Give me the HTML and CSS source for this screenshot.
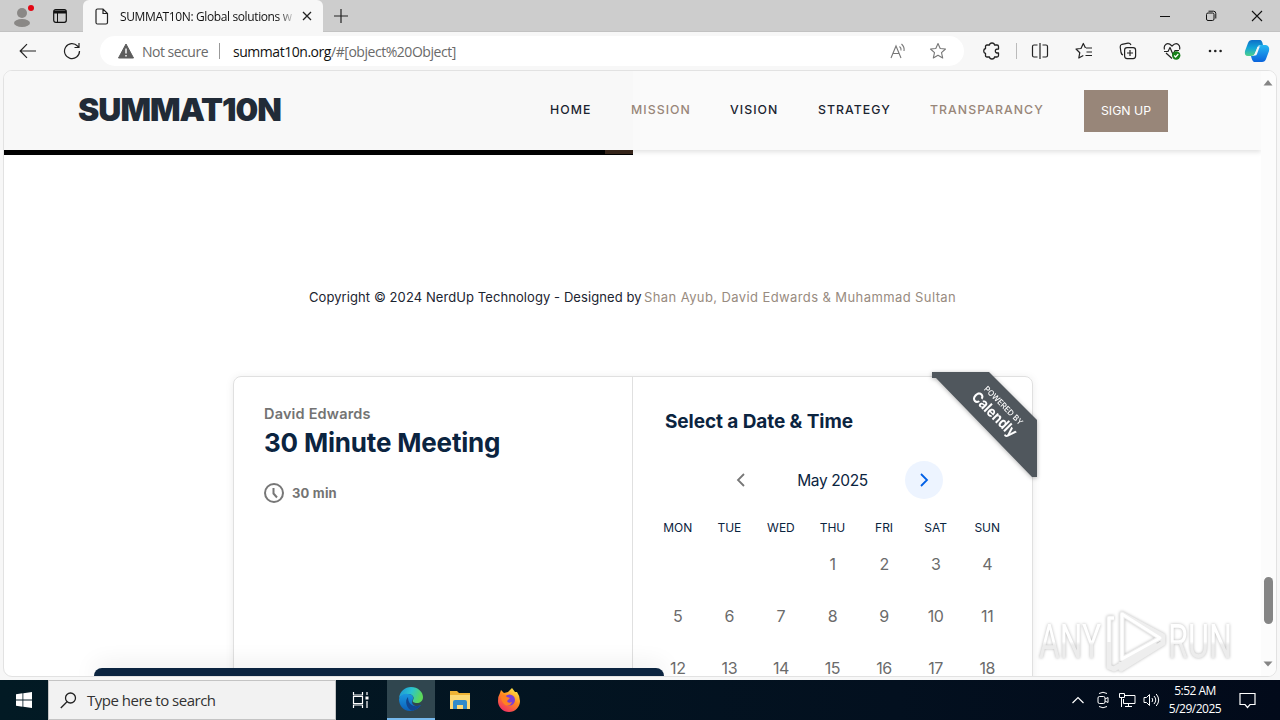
FILE: index.html
```html
<!DOCTYPE html>
<html lang="en">
<head>
    <meta charset="UTF-8">
    <meta name="viewport" content="width=device-width, initial-scale=1.0">
    <title>SUMMAT10N: Global solutions</title>
    <link rel="stylesheet" href="styles.css">
</head>
<body>
    <div class="tabstrip">
        <div class="tab-tools">
            <svg width="24" height="28" viewBox="0 0 24 28"><circle cx="12" cy="11" r="5" fill="#8a8886"/><ellipse cx="12" cy="21" rx="8" ry="4" fill="#8a8886"/><circle cx="21" cy="6" r="3" fill="#e30613"/></svg>
            <svg width="14" height="14" viewBox="0 0 14 14" fill="none" stroke="#111"><rect x=".7" y=".7" width="12.6" height="12.6" rx="2" stroke-width="1.2"/><path d="M1 3h12" stroke-width="3"/><path d="M4.5 3v10"/></svg>
        </div>
        <div class="tab">
            <svg width="14" height="17" viewBox="0 0 14 17" fill="none" stroke="#222" stroke-width="1.2"><path d="M1 2.5Q1 1 2.500 1H8l4.500 4.500V14.500Q12.500 16 11 16H2.500Q1 16 1 14.500zM8 1v4.500h4.500"/></svg>
            <span class="tab-title">SUMMAT10N: Global solutions w</span>
            <svg class="tab-close" width="10" height="10" viewBox="0 0 10 10" stroke="#222" stroke-width="1.3"><path d="M1 1l8 8M9 1l-8 8"/></svg>
        </div>
        <svg class="new-tab" width="14" height="14" viewBox="0 0 14 14" stroke="#222" stroke-width="1.200"><path d="M7 0v14M0 7h14"/></svg>
        <div class="window-buttons">
            <svg width="12" height="12" viewBox="0 0 12 12" stroke="#111"><path d="M1 6.500h10"/></svg>
            <svg width="12" height="12" viewBox="0 0 12 12" fill="none" stroke="#111"><rect x="1.500" y="3" width="7.500" height="7.500" rx="1.500"/><path d="M3.500 1.200H8.500Q10.800 1.200 10.800 3.500V8.500"/></svg>
            <svg width="12" height="12" viewBox="0 0 12 12" stroke="#111" stroke-width="1.100"><path d="M1 1l10 10M11 1L1 11"/></svg>
        </div>
    </div>

    <div class="toolbar">
        <svg class="back" width="18" height="16" viewBox="0 0 18 16" fill="none" stroke="#222" stroke-width="1.200"><path d="M17 8H1.500M8 1.200L1.200 8L8 14.800"/></svg>
        <svg class="reload" width="18" height="18" viewBox="0 0 18 18" fill="none" stroke="#222" stroke-width="1.200"><path d="M16.500 9A7.500 7.500 0 1 1 14.500 4L16 5.500M16 1v4.500h-4.500"/></svg>
        <div class="address">
            <svg class="warning" width="16" height="16" viewBox="0 0 16 16"><path d="M8 1L15.500 15H.5z" fill="#5c5c5c" stroke="#5c5c5c" stroke-linejoin="round"/><path d="M8 5.500v5M8 12v1.600" stroke="#fff" stroke-width="1.400"/></svg>
            <span class="not-secure">Not secure</span>
            <span class="separator"></span>
            <span class="url"><span class="host">summat10n.org</span>/#[object%20Object]</span>
            <svg class="read-aloud" width="17" height="16" viewBox="0 0 17 16" fill="none" stroke="#777" stroke-width="1.100"><path d="M1 15L6 3l5 12M3 10.500h6M9.500 3.500Q11.500 5 11 7.500M11.500 1Q14.800 4 14 8"/></svg>
            <svg width="18" height="18" viewBox="0 0 18 18" fill="none" stroke="#777" stroke-width="1.100" stroke-linejoin="round"><path d="M9 1.500l2.200 5 5.300.5-4 3.700 1.200 5.300L9 13.300 4.300 16l1.200-5.300-4-3.700 5.300-.5z"/></svg>
        </div>
        <div class="actions">
            <svg width="18" height="18" viewBox="0 0 18 18" fill="none" stroke="#222" stroke-width="1.300" stroke-linejoin="round"><path d="M2.500 4.500Q2.500 3 4 3H6.500Q6.700 1 9 1t2.500 2H14q1.500 0 1.500 1.500V7Q12.300 6.800 12.300 9t3.200 2V13.500Q15.500 15 14 15H11.500Q11.300 17 9 17t-2.500-2H4Q2.500 15 2.500 13.500V11.500Q.7 11 .7 9t1.800-2.500z"/></svg>
            <span class="separator"></span>
            <svg width="18" height="16" viewBox="0 0 18 16" fill="none" stroke="#222" stroke-width="1.200"><path d="M6.500 2H3Q1.500 2 1.500 3.500V12.500Q1.500 14 3 14H6.500M9 0v16M11.500 2H15Q16.500 2 16.500 3.500V12.500Q16.500 14 15 14H11.500"/></svg>
            <svg width="18" height="18" viewBox="0 0 18 18" fill="none" stroke="#222" stroke-width="1.200" stroke-linejoin="round"><path d="M11 6H17M11.500 10H17M10.500 13.500H17M10.500 6L8.300 1.500 6 6.500l-5 .5L4.800 10.700 3.800 16l4.500-2.500"/></svg>
            <svg width="18" height="18" viewBox="0 0 18 18" fill="none" stroke="#222" stroke-width="1.200"><path d="M4 13Q2.500 12.500 2 10.500L1.200 5Q1 3 3 2.300L9 1.200Q11 1 12 3"/><rect x="5.600" y="5.600" width="11" height="11" rx="2.500"/><path d="M11 8v6M8 11h6"/></svg>
            <svg width="18" height="18" viewBox="0 0 18 18" fill="none" stroke="#222" stroke-width="1.200" stroke-linejoin="round"><path d="M1.500 7.500Q.5 4 3 2.300T9 4Q12.500.5 15 2.300T16.500 7.500M3 11l6 5.500M1 9.500h4l2-4 3 7 2-4h4"/><circle cx="13.200" cy="13.500" r="4.200" fill="#16801a" stroke="none"/><path d="M11.200 13.500l1.400 1.500L15.300 12" stroke="#fff"/></svg>
            <svg width="16" height="4" viewBox="0 0 16 4" fill="#222"><circle cx="3" cy="2" r="1.300"/><circle cx="8.300" cy="2" r="1.300"/><circle cx="13.600" cy="2" r="1.300"/></svg>
            <svg class="copilot" width="26" height="24" viewBox="0 0 26 24">
                <defs>
                    <linearGradient id="cp1" x1="0" y1="0" x2="0" y2="1"><stop offset="0" stop-color="#0d6fc8"/><stop offset=".5" stop-color="#12a5d8"/><stop offset="1" stop-color="#4fd08b"/></linearGradient>
                    <linearGradient id="cp2" x1="0" y1="0" x2="0" y2="1"><stop offset="0" stop-color="#25b8f2"/><stop offset="1" stop-color="#0a63dc"/></linearGradient>
                </defs>
                <path d="M8 1H16Q18 1 19 6L16 6Q14 6 13 10L11 14Q10 17 7 17H4Q0 17 1 12L4 4Q5 1 8 1z" fill="url(#cp1)"/>
                <path d="M17 6H22Q26 7 25 12L22 20Q21 23 18 23H10Q8 22 7 17H9Q11 17 12 14L14 8Q15 6 17 6z" fill="url(#cp2)"/>
                <path d="M14 7.500h2.500q-1 0-1.500 2l-2 5.500q-.5 1.500-2 1.500H9.500q1 0 1.500-2l2-5.500q.3-1.500 1-1.500z" fill="#f7f7f7"/>
            </svg>
        </div>
    </div>

    <div class="viewport">
        <div class="page">
            <header class="site-header">
                <div class="logo">SUMMAT10N</div>
                <nav class="nav">
                    <a>HOME</a>
                    <a class="muted">MISSION</a>
                    <a>VISION</a>
                    <a>STRATEGY</a>
                    <a class="muted">TRANSPARANCY</a>
                    <a class="signup">SIGN UP</a>
                </nav>
            </header>
            <div class="video-edge"><span></span></div>
            <footer class="copyright">
                <span class="copy-own">Copyright © 2024 NerdUp Technology - Designed by</span>
                <span class="copy-names">Shan Ayub, David Edwards &amp; Muhammad Sultan</span>
            </footer>
            <div class="booking">
                <section class="event">
                    <div class="event-host">David Edwards</div>
                    <h1>30 Minute Meeting</h1>
                    <div class="duration">
                        <svg width="20" height="20" viewBox="0 0 20 20" fill="none" stroke="#777" stroke-width="2"><circle cx="10" cy="10" r="9"/><path d="M9.500 5v5.500L13 14.500"/></svg>
                        <span>30 min</span>
                    </div>
                </section>
                <section class="picker">
                    <h2>Select a Date &amp; Time</h2>
                    <div class="month">
                        <span class="arrow"><svg width="10" height="14" viewBox="0 0 10 14" fill="none" stroke="#777" stroke-width="1.800"><path d="M8 1L2 7l6 6"/></svg></span>
                        <span class="month-name">May 2025</span>
                        <span class="arrow next"><svg width="10" height="14" viewBox="0 0 10 14" fill="none" stroke="#0060e6" stroke-width="1.800"><path d="M2 1l6 6-6 6"/></svg></span>
                    </div>
                    <div class="weekdays"><span>MON</span><span>TUE</span><span>WED</span><span>THU</span><span>FRI</span><span>SAT</span><span>SUN</span></div>
                    <div class="days">
                        <span></span><span></span><span></span><span>1</span><span>2</span><span>3</span><span>4</span>
                        <span>5</span><span>6</span><span>7</span><span>8</span><span>9</span><span>10</span><span>11</span>
                        <span>12</span><span>13</span><span>14</span><span>15</span><span>16</span><span>17</span><span>18</span>
                    </div>
                </section>
                <svg class="ribbon" width="105" height="105" viewBox="0 0 105 105">
                    <path d="M0 0H57L105 48V105H100L4 6H0z" fill="#50575d"/>
                    <g transform="translate(66 39) rotate(45)" fill="#fff" text-anchor="middle">
                        <text class="ribbon-small" x="0" y="-5" textLength="51" lengthAdjust="spacingAndGlyphs">POWERED BY</text>
                        <text class="ribbon-name" x="0" y="10" textLength="57" lengthAdjust="spacingAndGlyphs">Calendly</text>
                    </g>
                </svg>
            </div>
        </div>
        <div class="scrollbar">
            <svg width="10" height="6" viewBox="0 0 10 6"><path d="M5 0l4.500 5.500H.5z" fill="#858585"/></svg>
            <div class="thumb"></div>
            <svg width="10" height="6" viewBox="0 0 10 6"><path d="M5 5.500L.5.500h9z" fill="#858585"/></svg>
        </div>
        <div class="cookie-banner"></div>
        <svg class="watermark" width="204" height="70" viewBox="0 0 204 70">
            <defs><linearGradient id="wm" x1="0" y1="0" x2="0" y2="1"><stop offset=".5" stop-color="#fff"/><stop offset=".56" stop-color="#ececec"/></linearGradient></defs>
            <text x="4" y="51" textLength="62" lengthAdjust="spacingAndGlyphs">ANY</text>
            <text x="133" y="51" textLength="64" lengthAdjust="spacingAndGlyphs">RUN</text>
            <path d="M87 7V52L125 31zM79 11H74V60L79 62L122 37M87 7L128 29V36L86 62V55" fill="none" stroke="#eeeeee" stroke-width="5" stroke-linejoin="round"/>
            <path d="M87 7V52L125 31zM74 35V11H79" fill="none" stroke="#fff" stroke-width="3" stroke-linejoin="round"/>
        </svg>
    </div>

    <div class="taskbar">
        <div class="start"><svg width="16" height="16" viewBox="0 0 16 16" fill="#fff"><path d="M0 2.200L6.500 1.300V7.500H0zM7.300 1.200L16 0V7.500H7.300zM0 8.500H6.500V14.700L0 13.800zM7.300 8.500H16V16L7.300 14.800z"/></svg></div>
        <div class="search">
            <svg width="17" height="17" viewBox="0 0 17 17" fill="none" stroke="#222" stroke-width="1.300"><circle cx="10.500" cy="6" r="5"/><path d="M7 9.700L.8 16"/></svg>
            <span>Type here to search</span>
        </div>
        <div class="task"><svg width="18" height="16" viewBox="0 0 18 16" fill="none" stroke="#fff" stroke-width="1.200"><path d="M1.500 0v3h9V0M1.500 16v-3h9v3M1.500 4.500h9v7h-9zM15 0v3M15 9v7"/><path d="M13.500 4.500h3v3h-3z" fill="#fff" stroke="none"/></svg></div>
        <div class="task active">
            <svg width="24" height="24" viewBox="0 0 24 24">
                <defs>
                    <linearGradient id="e1" x1="0" y1="0" x2="1" y2=".3"><stop offset="0" stop-color="#1c8fd6"/><stop offset=".55" stop-color="#2bc4cf"/><stop offset="1" stop-color="#5bd85a"/></linearGradient>
                    <linearGradient id="e2" x1="0" y1="0" x2="0" y2="1"><stop offset="0" stop-color="#1b98e0"/><stop offset="1" stop-color="#0b5fb8"/></linearGradient>
                </defs>
                <path d="M0 11C1 4 6 0 12 0c7 0 12 5 12 10 0 4-3 6-6 6-3 0-5-1-4-3 2-3-1-6-5-6-4 0-7 2-9 4z" fill="url(#e1)"/>
                <path d="M0 12C1 8 5 6 9 7c4 0 6 3 5 5-3 5 2 9 8 6-3 4-7 6-11 6C4 24 0 18 0 12z" fill="url(#e2)"/>
                <path d="M9 10c-4 4-1 12 4 13.800 4-.5 7-2.800 9-5.800-7 3-13 0-13-8z" fill="#12468f"/>
            </svg>
        </div>
        <div class="task"><svg width="22" height="20" viewBox="0 0 22 20"><path d="M1 1h7l2 2h11v16H1z" fill="#efb334"/><path d="M1 5h20v14H1z" fill="#fcd975"/><path d="M4 19v-7q0-2 2-2h10q2 0 2 2v7h-4v-4H8v4z" fill="#318bc9"/></svg></div>
        <div class="task">
            <svg width="24" height="24" viewBox="0 0 24 24">
                <defs><linearGradient id="ff" x1=".8" y1="0" x2=".2" y2="1"><stop offset="0" stop-color="#fff04a"/><stop offset=".45" stop-color="#ff8a1f"/><stop offset="1" stop-color="#f0286a"/></linearGradient></defs>
                <path d="M3 5l1-3 3 3 4-1 4-4 3 4 2 0q3 4 3 9a11 11 0 0 1-22 0Q1 8 3 5z" fill="url(#ff)"/>
                <circle cx="12.500" cy="12" r="5.500" fill="#7a3fd6"/>
                <path d="M4 8q4-2 6 1l3 1-3 3q1 3 5 1-2 5-7 3-4-3-4-9z" fill="#ff8122"/>
            </svg>
        </div>
        <div class="tray">
            <svg width="12" height="8" viewBox="0 0 12 8" fill="none" stroke="#fff" stroke-width="1.200"><path d="M.5 7L6 1.500 11.500 7"/></svg>
            <svg width="12" height="18" viewBox="0 0 12 18" fill="none" stroke="#fff"><rect x="1" y="5.500" width="7" height="7" rx="1.500"/><path d="M8 8l3-1.500v5L8 10M2 2.500Q6 0 10 2.500M2 15.500Q6 18 10 15.500"/></svg>
            <svg width="17" height="16" viewBox="0 0 17 16" fill="none" stroke="#fff"><path d="M6 3.500h10v8H4.500V7M9.500 11.500v3M6 14.500h7M.5 1.500h5v4h-5zM2.500 6v9"/></svg>
            <svg width="17" height="16" viewBox="0 0 17 16" fill="none" stroke="#fff"><path d="M1 5.500h2.500l3-3v11l-3-3H1zM9 6q1.500 2 0 4M11 4q3.500 4 0 8M13.200 2q5 6 0 12"/></svg>
        </div>
        <div class="clock"><span>5:52 AM</span><span class="date">5/29/2025</span></div>
        <svg class="notify" width="17" height="17" viewBox="0 0 17 17" fill="none" stroke="#fff" stroke-width="1.200"><path d="M1 1.500h15v11H11l-2.500 3-2.500-3H1z"/></svg>
    </div>
</body>
</html>
```
FILE: styles.css
```css
* {
    box-sizing: border-box;
}
body {
    margin: 0;
    width: 1280px;
    height: 720px;
    overflow: hidden;
    display: flex;
    flex-direction: column;
    background: #f7f7f7;
    font-family: "Open Sans", sans-serif;
    color: #111;
}
svg {
    display: block;
    flex: none;
}
span, a, .logo {
    white-space: nowrap;
}

/* browser */
.tabstrip {
    height: 32px;
    background: #cdcdcd;
    border-bottom: 1px solid #c2c2c2;
    display: flex;
    align-items: center;
}
.tab-tools {
    width: 83px;
    display: flex;
    align-items: center;
    gap: 19px;
    padding-left: 10px;
}
.tab {
    width: 240px;
    height: 32px;
    margin-top: 1px;
    background: #f7f7f7;
    border-radius: 6px 6px 0 0;
    display: flex;
    align-items: center;
    padding-left: 12px;
}
.tab-title {
    margin-left: 11px;
    width: 174px;
    overflow: hidden;
    font-size: 12px;
    letter-spacing: -0.38px;
    -webkit-mask-image: linear-gradient(to right, #000 158px, transparent 176px);
}
.tab-close {
    margin-left: 8px;
}
.new-tab {
    margin-left: 11px;
}
.window-buttons {
    margin-left: auto;
    display: flex;
    gap: 34px;
    padding-right: 17px;
}
.toolbar {
    height: 38px;
    display: flex;
    align-items: center;
    padding-left: 19px;
}
.reload {
    margin-left: 26px;
}
.address {
    width: 864px;
    height: 30px;
    margin-left: 19px;
    padding: 0 17px 0 18px;
    background: #fff;
    border-radius: 15px;
    display: flex;
    align-items: center;
    font-size: 14px;
    color: #6a6a6a;
}
.not-secure {
    margin-left: 8px;
    width: 67px;
    letter-spacing: -0.5px;
}
.separator {
    width: 1px;
    height: 16px;
    background: #bbb;
}
.address .separator {
    margin: 0 13px 0 10px;
    background: #999;
}
.url {
    letter-spacing: -0.46px;
}
.host {
    color: #111;
}
.read-aloud {
    margin-left: auto;
    margin-right: 22px;
}
.actions {
    display: flex;
    align-items: center;
    gap: 26px;
    padding-left: 19px;
}
.actions .separator {
    margin: 0 -12px 0 -11px;
}
.actions .copilot {
    margin-left: -5px;
}

/* page */
.viewport {
    position: relative;
    height: 607px;
    margin: 0 3px 3px;
    border: 1px solid #e2e2e2;
    border-radius: 9px;
    background: #fff;
    display: flex;
    overflow: hidden;
}
.page {
    width: 1257px;
}
.site-header {
    height: 79px;
    padding: 0 0 2px 74px;
    display: grid;
    grid-template-columns: 472px 1fr;
    align-items: center;
    background: linear-gradient(to right, #f8f8f8 629px, #fafafa 629px);
    box-shadow: 0 2px 5px rgba(0, 0, 0, 0.12);
}
.logo {
    font-family: Inter, sans-serif;
    font-weight: 900;
    font-size: 32px;
    letter-spacing: -1px;
    color: #212b37;
}
.nav {
    display: grid;
    grid-template-columns: 41px 59px 48px 72px 114px 84px;
    column-gap: 40px;
    align-items: center;
    font-family: Inter, sans-serif;
    font-size: 12.3px;
    font-weight: 500;
    letter-spacing: 1.05px;
    color: #1b2430;
}
.nav .muted {
    color: #988679;
}
.nav .signup {
    height: 42px;
    margin-top: 2px;
    line-height: 42px;
    text-align: center;
    background: #988679;
    color: #fff;
    font-weight: 400;
    letter-spacing: 0;
}
.video-edge {
    position: relative;
    width: 629px;
    height: 5px;
    background: #000;
    display: flex;
    justify-content: flex-end;
}
.video-edge span {
    width: 28px;
    height: 4px;
    background: #352419;
}
.copyright {
    margin-top: 132px;
    height: 20px;
    padding-left: 305px;
    display: grid;
    grid-template-columns: 335px auto;
    line-height: 20px;
    font-family: Inter, sans-serif;
    font-size: 13px;
    color: #1b2430;
}
.copy-own {
    letter-spacing: 0.08px;
}
.copy-names {
    letter-spacing: 0.4px;
    color: #988b80;
}
.booking {
    position: relative;
    width: 800px;
    height: 700px;
    margin: 69px 0 0 229px;
    border: 1px solid #e0e0e0;
    border-radius: 8px;
    box-shadow: 0 1px 8px rgba(0, 0, 0, 0.08);
    display: grid;
    grid-template-columns: 399px 399px;
    font-family: Inter, sans-serif;
    color: #0b2440;
}
.event {
    padding: 27px 30px;
    border-right: 1px solid #e0e0e0;
}
.event-host {
    line-height: 20px;
    font-size: 14.5px;
    font-weight: 600;
    letter-spacing: 0.18px;
    color: #737373;
}
h1 {
    margin: 1px 0 0;
    line-height: 36px;
    font-size: 26px;
    font-weight: 700;
    letter-spacing: -0.18px;
}
.duration {
    margin-top: 22px;
    display: flex;
    align-items: center;
    gap: 8px;
    font-size: 13px;
    font-weight: 700;
    letter-spacing: 0.2px;
    color: #737373;
}
.picker {
    padding: 33px 19px 0;
}
h2 {
    margin: 0 0 0 13px;
    line-height: 24px;
    font-size: 19px;
    font-weight: 700;
    letter-spacing: -0.08px;
}
.month {
    margin: 27px 70px 0;
    height: 38px;
    display: flex;
    align-items: center;
    justify-content: space-between;
    font-size: 16px;
}
.month-name {
    font-size: 15.5px;
    letter-spacing: -0.4px;
}
.arrow {
    width: 38px;
    height: 38px;
    border-radius: 50%;
    display: grid;
    place-items: center;
}
.next {
    background: #edf4ff;
}
.weekdays, .days {
    width: 361px;
    display: grid;
    grid-template-columns: repeat(7, 1fr);
    text-align: center;
}
.weekdays {
    margin-top: 18px;
    line-height: 22px;
    font-size: 12px;
}
.days {
    grid-auto-rows: 52px;
    line-height: 51px;
    font-size: 16px;
    letter-spacing: -0.4px;
    color: #6b6b6b;
}
.ribbon {
    position: absolute;
    left: 698px;
    top: -5px;
    filter: drop-shadow(0 1px 2px rgba(0, 0, 0, 0.3));
}
.ribbon-small {
    font-size: 8px;
    font-weight: 500;
}
.ribbon-name {
    font-size: 15px;
    font-weight: 700;
}
.scrollbar {
    width: 15px;
    height: 605px;
    background: #fcfcfc;
    display: flex;
    flex-direction: column;
    align-items: center;
    padding: 9px 1px 9px 0;
}
.thumb {
    width: 9px;
    height: 47px;
    margin-top: 491px;
    margin-bottom: auto;
    border-radius: 5px;
    background: #858585;
}
.cookie-banner {
    position: absolute;
    left: 90px;
    bottom: 0;
    width: 570px;
    height: 8px;
    background: #0b2440;
    border-radius: 8px 8px 0 0;
    box-shadow: 0 0 25px rgba(0, 0, 0, 0.16);
}
.watermark {
    position: absolute;
    left: 1031px;
    top: 536px;
    filter: drop-shadow(0 0 1.5px rgba(0, 0, 0, 0.28));
}
.watermark text {
    font-family: Roboto, sans-serif;
    font-size: 49px;
    fill: url(#wm);
}

/* taskbar */
.taskbar {
    height: 40px;
    background: linear-gradient(to right, #021a24, #03101f 70%, #020a1a);
    display: flex;
    align-items: center;
    color: #fff;
}
.start {
    width: 48px;
    display: grid;
    place-items: center;
}
.search {
    width: 288px;
    height: 40px;
    background: #f2f2f2;
    border: 1px solid #c4c4c4;
    display: flex;
    align-items: center;
    gap: 10px;
    padding-left: 11px;
    font-size: 15px;
    letter-spacing: -0.5px;
    color: #333;
}
.task {
    width: 49px;
    height: 40px;
    display: grid;
    place-items: center;
}
.active {
    margin-left: 2px;
    width: 48px;
    background: #30464f;
    border-bottom: 2px solid #76b9ed;
}
.tray {
    margin-left: auto;
    display: flex;
    align-items: center;
    gap: 7px;
}
.tray svg:first-child {
    margin-right: 6px;
}
.tray svg:nth-child(2) {
    margin-right: 3px;
}
.clock {
    width: 64px;
    margin-left: 3px;
    display: flex;
    flex-direction: column;
    align-items: center;
    font-size: 12px;
    line-height: 18px;
    letter-spacing: -0.5px;
}
.notify {
    margin: 0 24px 0 12px;
}
```
